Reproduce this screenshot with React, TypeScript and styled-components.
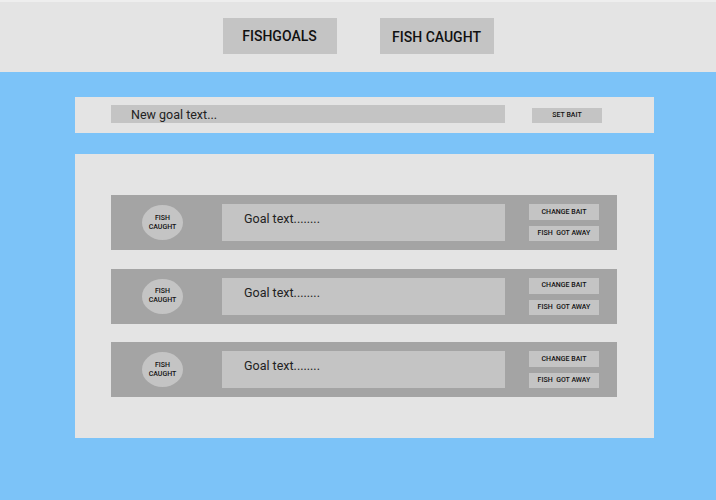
import React from "react";
import styled, { createGlobalStyle } from "styled-components";

const Global = createGlobalStyle`
  html, body { margin: 0; padding: 0; }
  body { font-family: Roboto, "Liberation Sans", sans-serif; background: #7cc3f8; }
  * { box-sizing: border-box; }
`;

const Page = styled.div`
  width: 716px;
  height: 500px;
  background: #7cc3f8;
  display: flex;
  flex-direction: column;
`;

const Header = styled.header`
  height: 72px;
  background: #e4e4e4;
  border-top: 2px solid #eeeeee;
  display: flex;
  justify-content: center;
  align-items: flex-start;
  gap: 43px;
  padding-top: 16px;
`;

const NavButton = styled.button<{ $drop?: number }>`
  width: 114px;
  height: 36px;
  background: #c4c4c4;
  border: none;
  font-family: Roboto, "Liberation Sans", sans-serif;
  font-weight: 500;
  font-size: 14px;
  color: #111;
  padding: ${(p) => `${p.$drop ?? 0}px 0 0`};
  display: flex;
  align-items: center;
  justify-content: center;
`;

const Main = styled.main`
  display: flex;
  flex-direction: column;
  padding: 25px 62px 0 75px;
  gap: 21px;
`;

const InputPanel = styled.section`
  height: 36px;
  background: #e4e4e4;
  display: flex;
  align-items: flex-start;
  padding: 8px 0 0 36px;
`;

const GoalInput = styled.div`
  width: 394px;
  height: 18px;
  background: #c4c4c4;
  font-size: 12.5px;
  color: #222;
  padding-left: 20px;
  line-height: 20px;
`;

const SmallButton = styled.button<{ $tall?: boolean }>`
  width: 70px;
  height: ${(p) => (p.$tall ? "16px" : "15px")};
  background: #c4c4c4;
  border: none;
  font-family: Roboto, "Liberation Sans", sans-serif;
  font-weight: 500;
  font-size: 7px;
  color: #111;
  padding: 0 0 1px;
  display: flex;
  align-items: center;
  justify-content: center;
  white-space: pre;
`;

const SetBait = styled(SmallButton)`
  margin: 3px 0 0 27px;
`;

const ListPanel = styled.section`
  height: 284px;
  background: #e4e4e4;
  display: flex;
  flex-direction: column;
  gap: 18.5px;
  padding: 41px 0 0 36px;
`;

const Row = styled.div`
  width: 506px;
  height: 55px;
  flex-shrink: 0;
  background: #a4a4a4;
  display: flex;
  align-items: flex-start;
  padding: 9px 0 0 31px;
`;

const Caught = styled.div`
  width: 41px;
  height: 35px;
  margin-top: 1px;
  border-radius: 50%;
  background: #c4c4c4;
  display: flex;
  align-items: center;
  justify-content: center;
  text-align: center;
  font-size: 7px;
  font-weight: 500;
  line-height: 9px;
  color: #111;
`;

const GoalText = styled.div`
  width: 283px;
  height: 37px;
  margin-left: 39px;
  background: #c4c4c4;
  font-size: 12.5px;
  color: #222;
  padding: 7px 0 0 22px;
`;

const Actions = styled.div`
  display: flex;
  flex-direction: column;
  gap: 6px;
  margin-left: 24px;
`;

const goals = [1, 2, 3];

export default function App() {
  return (
    <Page>
      <Global />
      <Header>
        <NavButton>FISHGOALS</NavButton>
        <NavButton $drop={2}>FISH CAUGHT</NavButton>
      </Header>
      <Main>
        <InputPanel>
          <GoalInput>New goal text...</GoalInput>
          <SetBait>SET BAIT</SetBait>
        </InputPanel>
        <ListPanel>
          {goals.map((g) => (
            <Row key={g}>
              <Caught>
                FISH
                <br />
                CAUGHT
              </Caught>
              <GoalText>Goal text........</GoalText>
              <Actions>
                <SmallButton $tall>CHANGE BAIT</SmallButton>
                <SmallButton>{"FISH  GOT AWAY"}</SmallButton>
              </Actions>
            </Row>
          ))}
        </ListPanel>
      </Main>
    </Page>
  );
}
